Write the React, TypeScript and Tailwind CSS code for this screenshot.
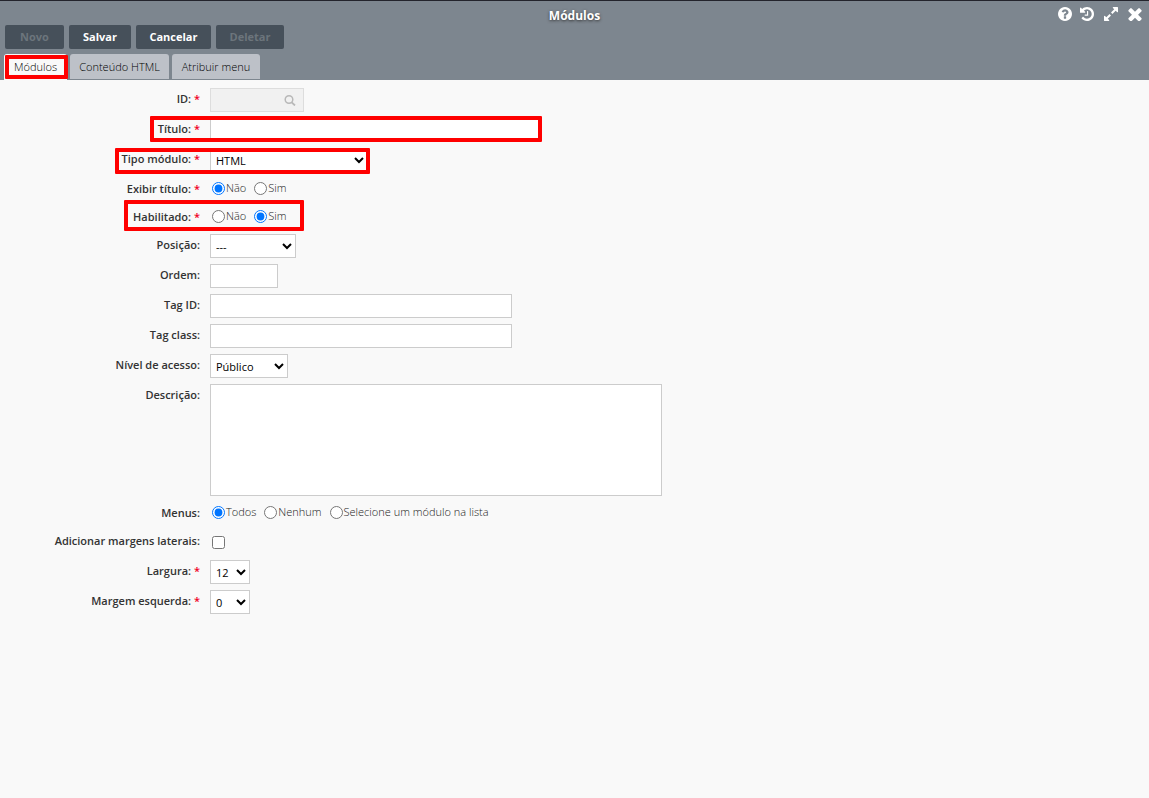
import type { ReactNode } from "react";

const ICONS = {
  help: "M1024 1376v-192q0-14-9-23t-23-9h-192q-14 0-23 9t-9 23v192q0 14 9 23t23 9h192q14 0 23-9t9-23zm256-672q0-88-55.5-163t-138.5-116-170.5-41q-243 0-371 213-15 24 8 42l132 100q7 6 19 6 16 0 25-12 53-68 86-92 34-24 86-24 48 0 85.5 26t37.5 59q0 38-20 61t-68 45q-63 28-115.5 86.5t-52.5 125.5v36q0 14 9 23t23 9h192q14 0 23-9t9-23q0-19 21.5-49.5t54.5-49.5q32-18 49-28.5t46-35 44.5-48 28-60.5 12.5-81zm384 192q0 209-103 385.5t-279.5 279.5-385.5 103-385.5-103-279.5-279.5-103-385.5 103-385.5 279.5-279.5 385.5-103 385.5 103 279.5 279.5 103 385.5z",
  history:
    "M1664 896q0 156-61 298t-164 245-245 164-298 61q-172 0-327-72.5t-264-204.5q-7-10-6.5-22.5t8.5-20.5l137-138q10-9 25-9 16 2 23 12 73 95 179 147t225 52q104 0 198.5-40.5t163.5-109.5 109.5-163.5 40.5-198.5-40.5-198.5-109.5-163.5-163.5-109.5-198.5-40.5q-98 0-188 35.5t-160 101.5l137 138q31 30 14 69-17 40-59 40h-448q-26 0-45-19t-19-45v-448q0-42 40-59 39-17 69 14l130 129q107-101 244.5-156.5t284.5-55.5q156 0 298 61t245 164 164 245 61 298zm-640-288v448q0 14-9 23t-23 9h-320q-14 0-23-9t-9-23v-64q0-14 9-23t23-9h224v-352q0-14 9-23t23-9h64q14 0 23 9t9 23z",
  expand:
    "M883 1056q0 13-10 23l-332 332 144 144q19 19 19 45t-19 45-45 19h-448q-26 0-45-19t-19-45v-448q0-26 19-45t45-19 45 19l144 144 332-332q10-10 23-10t23 10l114 114q10 10 10 23zm781-864v448q0 26-19 45t-45 19-45-19l-144-144-332 332q-10 10-23 10t-23-10l-114-114q-10-10-10-23t10-23l332-332-144-144q-19-19-19-45t19-45 45-19h448q26 0 45 19t19 45z",
  close:
    "M1490 1322q0 40-28 68l-136 136q-28 28-68 28t-68-28l-294-294-294 294q-28 28-68 28t-68-28l-136-136q-28-28-28-68t28-68l294-294-294-294q-28-28-28-68t28-68l136-136q28-28 68-28t68 28l294 294 294-294q28-28 68-28t68 28l136 136q28 28 28 68t-28 68l-294 294 294 294q28 28 28 68z",
};

function HeaderIcon({ path, label, viewBox = "128 128 1536 1536" }: { path: string; label: string; viewBox?: string }) {
  return (
    <button type="button" aria-label={label} className="size-[14px] text-white">
      <svg viewBox={viewBox} className="size-[14px]" fill="currentColor">
        <path d={path} />
      </svg>
    </button>
  );
}

function Highlight({ place }: { place: string }) {
  return (
    <span
      aria-hidden="true"
      className={`pointer-events-none absolute rounded-[1px] border-4 border-[#ff0000] ${place}`}
    />
  );
}

function Row({
  label,
  htmlFor,
  required,
  group,
  children,
}: {
  label: string;
  htmlFor?: string;
  required?: boolean;
  group?: boolean;
  children: ReactNode;
}) {
  const text = (
    <>
      {label}:{required && <span className="text-[#f0001c]"> *</span>}
    </>
  );
  const labelClass = "w-[200px] shrink-0 text-right font-semibold leading-[22px] text-[#333]";
  return (
    <div
      className={group ? "relative flex h-[22px] gap-[10px]" : "relative flex gap-[10px]"}
      role={group ? "radiogroup" : undefined}
      aria-label={group ? label : undefined}
    >
      {group ? (
        <span className={labelClass}>{text}</span>
      ) : (
        <label htmlFor={htmlFor} className={labelClass}>
          {text}
        </label>
      )}
      {children}
    </div>
  );
}

function Radios({ name, options, checked }: { name: string; options: string[]; checked: string }) {
  return (
    <div className="flex h-5 items-center gap-2 pl-[2px]">
      {options.map((o) => (
        <label key={o} className="flex items-center gap-[1px] font-[350] text-[#222]">
          <input type="radio" name={name} defaultChecked={o === checked} className="m-0 size-[13px]" />
          {o}
        </label>
      ))}
    </div>
  );
}

const field = "border border-[#ccc] bg-white";

function Select({ id, value, width }: { id: string; value: string; width: string }) {
  return (
    <select id={id} className={`h-6 pr-[2px] pl-[1px] text-black ${field} ${width}`}>
      <option>{value}</option>
    </select>
  );
}

const button = "h-6 rounded-[2px] bg-[#46505a] font-bold text-white disabled:text-[#6c757c]";
const tab = "h-[25px] rounded-t-[3px] bg-[#bdc1c8] pt-[1px] font-[350] text-black";

export default function App() {
  return (
    <div className="min-h-screen bg-[#f9f9f9] font-['Open_Sans','Noto_Sans',sans-serif] text-[11px]">
      <header className="relative border-t border-[#23242c] bg-[#7d868f]">
        <h1 className="h-6 pt-[5px] text-center text-[12px] leading-[20px] font-bold text-white [text-shadow:0_1px_3px_#333]">
          Módulos
        </h1>
        <div className="absolute top-[6px] right-[7px] flex gap-[10px]">
          <div className="flex gap-2">
            <HeaderIcon path={ICONS.help} label="Ajuda" />
            <HeaderIcon path={ICONS.history} label="Histórico" />
          </div>
          <HeaderIcon path={ICONS.expand} label="Expandir" />
          <HeaderIcon path={ICONS.close} label="Fechar" viewBox="270 270 1252 1252" />
        </div>
        <div className="flex gap-[5px] px-[5px]">
          <button type="button" disabled className={`w-[59px] ${button}`}>Novo</button>
          <button type="button" className={`w-[62px] ${button}`}>Salvar</button>
          <button type="button" className={`w-[75px] ${button}`}>Cancelar</button>
          <button type="button" disabled className={`w-[68px] ${button}`}>Deletar</button>
        </div>
        <div role="tablist" className="mt-[5px] flex h-[26px] gap-[3px] pl-1">
          <button type="button" role="tab" aria-selected="true" className="relative h-[26px] w-[63px] rounded-t-[3px] bg-[#f9f9f9] font-[350] text-black">
            Módulos
            <Highlight place="inset-y-[1px] left-[1px] -right-[1px]" />
          </button>
          <button type="button" role="tab" aria-selected="false" className={`w-[99px] ${tab}`}>Conteúdo HTML</button>
          <button type="button" role="tab" aria-selected="false" className={`w-[88px] ${tab}`}>Atribuir menu</button>
        </div>
      </header>

      <form className="flex flex-col gap-[6px] pt-2">
        <Row label="ID" htmlFor="id" required>
          <div className="flex h-6 w-[94px] items-center border border-[#ddd] bg-[#f1f1f1] pr-[7px]">
            <input id="id" disabled className="h-full min-w-0 flex-1 px-1" />
            <svg viewBox="0 0 12 12" className="size-3 shrink-0 text-[#b8b8b8]" fill="none" stroke="currentColor" strokeWidth="1.5">
              <circle cx="5" cy="5.5" r="3.8" />
              <path d="M7.7 8.3 11 11.5" strokeWidth="1.8" />
            </svg>
          </div>
        </Row>
        <Row label="Título" htmlFor="titulo" required>
          <input id="titulo" className={`h-6 w-[330px] px-1 ${field}`} />
          <Highlight place="left-[150px] -top-[2px] h-[26px] w-[392px]" />
        </Row>
        <Row label="Tipo módulo" htmlFor="tipo" required>
          <Select id="tipo" value="HTML" width="w-[158px]" />
          <Highlight place="left-[115px] top-0 h-[26px] w-[255px]" />
        </Row>
        <Row label="Exibir título" required group>
          <Radios name="exibir" options={["Não", "Sim"]} checked="Não" />
        </Row>
        <Row label="Habilitado" required group>
          <Radios name="habilitado" options={["Não", "Sim"]} checked="Sim" />
          <Highlight place="left-[124px] -top-[6px] h-[31px] w-[180px]" />
        </Row>
        <Row label="Posição" htmlFor="posicao">
          <Select id="posicao" value="---" width="w-[86px]" />
        </Row>
        <Row label="Ordem" htmlFor="ordem">
          <input id="ordem" className={`h-6 w-[68px] px-1 ${field}`} />
        </Row>
        <Row label="Tag ID" htmlFor="tagid">
          <input id="tagid" className={`h-6 w-[302px] px-1 ${field}`} />
        </Row>
        <Row label="Tag class" htmlFor="tagclass">
          <input id="tagclass" className={`h-6 w-[302px] px-1 ${field}`} />
        </Row>
        <Row label="Nível de acesso" htmlFor="nivel">
          <Select id="nivel" value="Público" width="w-[78px]" />
        </Row>
        <Row label="Descrição" htmlFor="descricao">
          <textarea id="descricao" className={`h-28 w-[452px] resize-none px-1 ${field}`} />
        </Row>
        <Row label="Menus" group>
          <Radios name="menus" options={["Todos", "Nenhum", "Selecione um módulo na lista"]} checked="Todos" />
        </Row>
        <Row label="Adicionar margens laterais" htmlFor="margens">
          <div className="flex h-6 items-center pl-[2px]">
            <input id="margens" type="checkbox" className="m-0 size-[13px]" />
          </div>
        </Row>
        <Row label="Largura" htmlFor="largura" required>
          <Select id="largura" value="12" width="w-10" />
        </Row>
        <Row label="Margem esquerda" htmlFor="esquerda" required>
          <Select id="esquerda" value="0" width="w-10" />
        </Row>
      </form>
    </div>
  );
}
